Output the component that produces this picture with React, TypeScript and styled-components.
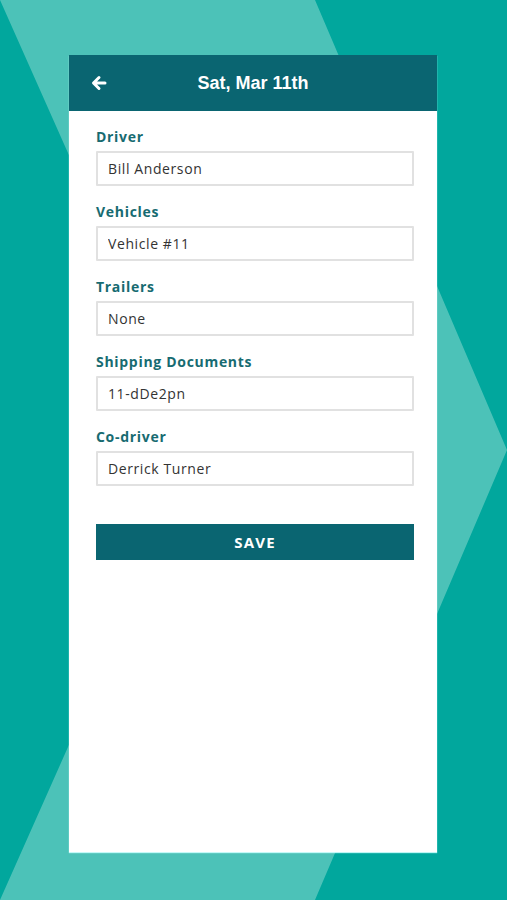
import React from 'react';
import styled, { createGlobalStyle } from 'styled-components';

const GlobalStyle = createGlobalStyle`
  html, body {
    margin: 0;
    padding: 0;
  }
  body {
    font-family: "Open Sans", "Liberation Sans", sans-serif;
    background: #01a79d;
  }
`;

const fields = [
  { label: 'Driver', value: 'Bill Anderson' },
  { label: 'Vehicles', value: 'Vehicle #11' },
  { label: 'Trailers', value: 'None' },
  { label: 'Shipping Documents', value: '11-dDe2pn' },
  { label: 'Co-driver', value: 'Derrick Turner' },
];

const BackArrow: React.FC = () => (
  <svg width="16" height="16" viewBox="0 0 16 16" aria-hidden="true">
    <path
      d="M14 8H3M8 2.5L2.5 8L8 13.5"
      fill="none"
      stroke="#ffffff"
      strokeWidth="3"
      strokeLinecap="round"
      strokeLinejoin="round"
    />
  </svg>
);

const App: React.FC = () => {
  return (
    <Page>
      <GlobalStyle />
      <Card>
        <Header>
          <BackButton type="button" aria-label="Back">
            <BackArrow />
          </BackButton>
          <Title>Sat, Mar 11th</Title>
        </Header>
        <Body>
          <FieldList>
            {fields.map((f) => (
              <Field key={f.label}>
                <Label>{f.label}</Label>
                <Input readOnly value={f.value} />
              </Field>
            ))}
          </FieldList>
          <SaveButton type="button">SAVE</SaveButton>
        </Body>
      </Card>
    </Page>
  );
};

const Page = styled.div`
  position: relative;
  width: 507px;
  height: 900px;
  overflow: hidden;
  background: #01a79d;
  padding-top: 55px;
  box-sizing: border-box;

  &::before {
    content: '';
    position: absolute;
    inset: 0;
    background: #4cc2b8;
    clip-path: polygon(0 0, 315px 0, 507px 450px, 315px 900px, 0 900px, 200px 450px);
  }
`;

const Card = styled.div`
  position: relative;
  width: 368px;
  height: 797px;
  margin-left: 69px;
  background: #ffffff;
  box-shadow: 0 1px 1px rgba(210, 255, 255, 0.9);
  display: flex;
  flex-direction: column;
`;

const Header = styled.div`
  height: 56px;
  background: #0a6571;
  display: flex;
  align-items: center;
  justify-content: center;
  position: relative;
`;

const BackButton = styled.button`
  position: absolute;
  left: 22px;
  top: 50%;
  transform: translateY(-50%);
  background: none;
  border: none;
  padding: 0;
  display: flex;
  cursor: pointer;
`;

const Title = styled.h1`
  margin: 0;
  font-family: "Liberation Sans", Arial, sans-serif;
  font-weight: 700;
  font-size: 18px;
  color: #ffffff;
`;

const Body = styled.div`
  padding: 17px 23px 0 27px;
  display: flex;
  flex-direction: column;
`;

const FieldList = styled.div`
  display: flex;
  flex-direction: column;
  gap: 17px;
`;

const Field = styled.div`
  display: flex;
  flex-direction: column;
`;

const Label = styled.label`
  font-family: "Open Sans", "Liberation Sans", sans-serif;
  font-weight: 700;
  font-size: 14px;
  line-height: 18px;
  letter-spacing: 0.7px;
  color: #176b71;
  margin-bottom: 5px;
`;

const Input = styled.input`
  box-sizing: border-box;
  width: 318px;
  height: 35px;
  border: 2px solid #e1e1e1;
  border-radius: 1px;
  padding: 0 10px;
  font-family: "Open Sans", "Liberation Sans", sans-serif;
  font-size: 14px;
  letter-spacing: 0.6px;
  color: #333333;
  background: #ffffff;
  outline: none;
`;

const SaveButton = styled.button`
  margin-top: 38px;
  width: 318px;
  height: 36px;
  border: none;
  background: #0a6571;
  color: #ffffff;
  font-family: "Open Sans", "Liberation Sans", sans-serif;
  font-weight: 700;
  font-size: 15px;
  letter-spacing: 1.2px;
  cursor: pointer;
`;

export default App;
